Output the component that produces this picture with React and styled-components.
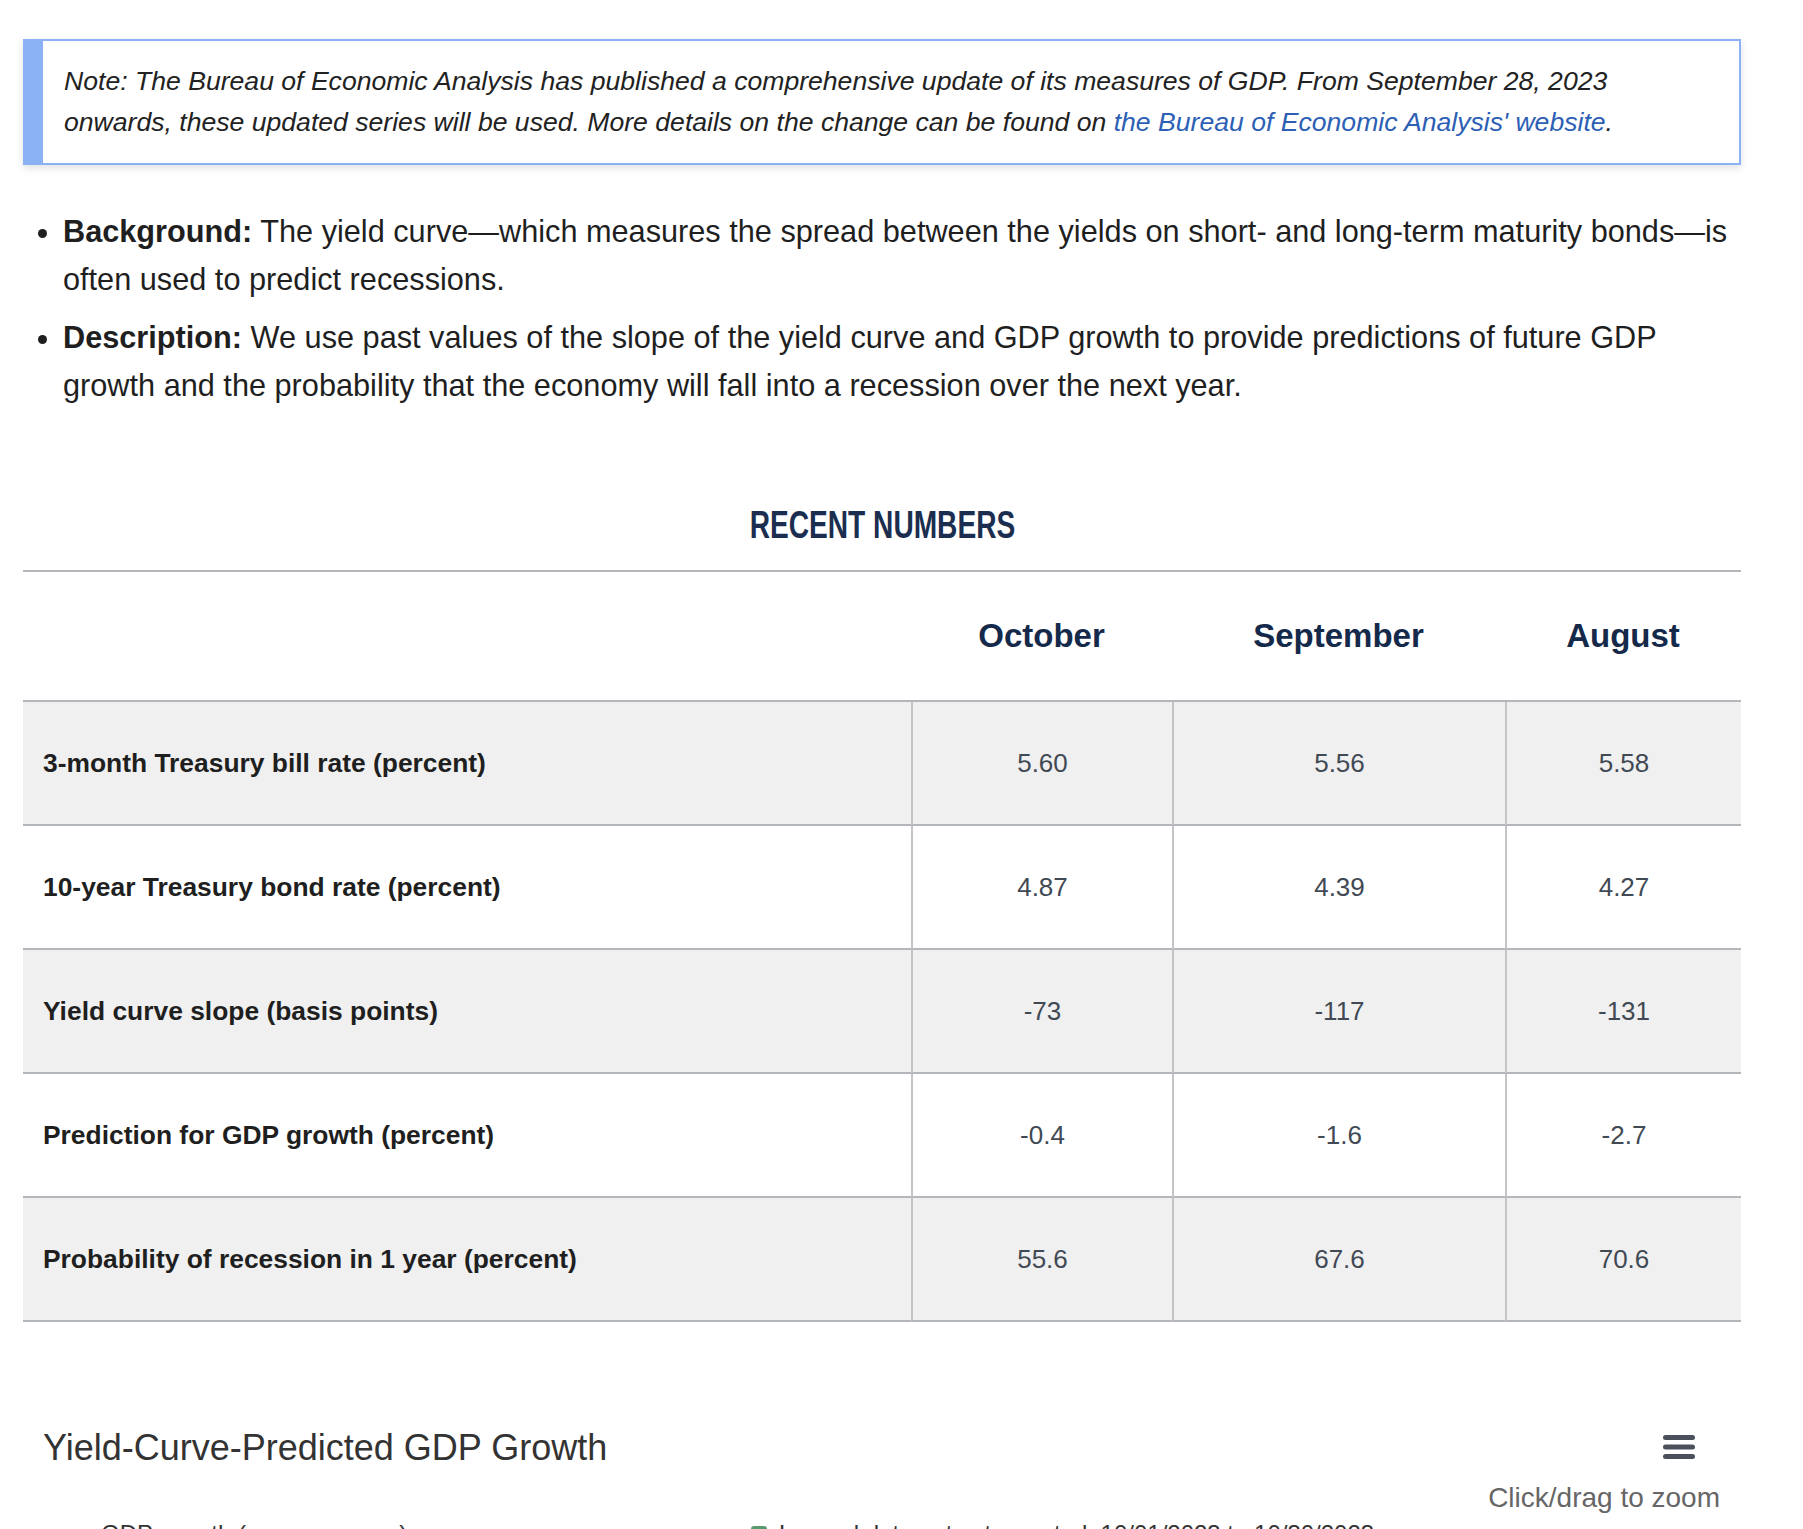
import React from "react";
import styled, { createGlobalStyle } from "styled-components";

const GlobalStyle = createGlobalStyle`
  html, body {
    margin: 0;
    padding: 0;
    background: #ffffff;
  }
  body {
    font-family: "Liberation Sans", Arial, sans-serif;
    color: #1f1f1f;
  }
`;

const Page = styled.div`
  width: 1718px;
  padding: 39px 0 0 23px;
`;

const Note = styled.div`
  border: 2px solid #8ab2f5;
  border-left: 20px solid #8ab2f5;
  box-shadow: 0 3px 8px rgba(0, 0, 0, 0.12);
  padding: 20px 20px 20px 21px;
  font-style: italic;
  font-size: 26.6px;
  line-height: 41px;
  color: #222;

  & a {
    color: #2d5fb5;
    text-decoration: none;
  }
`;

const Bullets = styled.ul`
  margin: 43px 0 0;
  padding-left: 40px;
  font-size: 30.7px;
  line-height: 48px;
  color: #1f1f1f;
`;

const Item = styled.li`
  margin-bottom: 10px;

  & b {
    font-weight: 700;
  }
`;

const Heading = styled.h2`
  margin: 91px 0 0;
  padding-bottom: 21px;
  border-bottom: 2px solid #b3b7bc;
  height: 48px;
  line-height: 48px;
  text-align: center;
  font-size: 38px;
  font-weight: 700;
  color: #1b2e50;
`;

const HeadingText = styled.span`
  display: inline-block;
  transform: scaleX(0.74);
`;

const Table = styled.table`
  width: 1718px;
  table-layout: fixed;
  border-collapse: separate;
  border-spacing: 0;
`;

const HeadCell = styled.th`
  padding: 44px 0;
  line-height: 40px;
  font-size: 33px;
  font-weight: 700;
  color: #15294b;
  text-align: center;
  border-bottom: 2px solid #b3b7bc;
`;

const Row = styled.tr`
  background: ${(p) => (p.$shaded ? "#f0f0f0" : "#ffffff")};
`;

const LabelCell = styled.td`
  padding: 45px 0 45px 20px;
  line-height: 32px;
  font-size: 26.4px;
  font-weight: 700;
  color: #1f1f1f;
  border-bottom: 2px solid #b3b7bc;
`;

const ValueCell = styled.td`
  padding: 45px 0;
  line-height: 32px;
  font-size: 26px;
  color: #414954;
  text-align: center;
  border-bottom: 2px solid #b3b7bc;
  border-left: 2px solid #c4c4c4;
`;

const Chart = styled.section`
  margin-top: 105px;
  padding: 0 21px 0 20px;
`;

const ChartHeader = styled.div`
  display: flex;
  justify-content: space-between;
  align-items: flex-start;
`;

const ChartTitle = styled.div`
  font-size: 36px;
  line-height: 42px;
  color: #333333;
`;

const ChartTools = styled.div`
  display: flex;
  flex-direction: column;
  align-items: flex-end;
`;

const MenuButton = styled.div`
  margin: 8px 25px 0 0;
  height: 24px;
  line-height: 0;
`;

const ZoomHint = styled.div`
  margin-top: 23px;
  font-size: 28px;
  line-height: 32px;
  color: #666666;
`;

const Legend = styled.div`
  display: flex;
  margin-top: 6px;
  padding-left: 30px;
  font-size: 24px;
  line-height: 28px;
  color: #333333;
`;

const LegendItem = styled.div`
  display: flex;
  align-items: center;
  gap: 12px;
  width: ${(p) => p.$width}px;
`;

const LineSymbol = styled.span`
  display: inline-block;
  width: 16px;
  height: 3px;
  background: ${(p) => p.$color};
`;

const Swatch = styled.span`
  display: inline-block;
  width: 16px;
  height: 16px;
  border-radius: 3px;
  background: ${(p) => p.$color};
`;

const months = ["October", "September", "August"];

const rows = [
  { label: "3-month Treasury bill rate (percent)", values: ["5.60", "5.56", "5.58"] },
  { label: "10-year Treasury bond rate (percent)", values: ["4.87", "4.39", "4.27"] },
  { label: "Yield curve slope (basis points)", values: ["-73", "-117", "-131"] },
  { label: "Prediction for GDP growth (percent)", values: ["-0.4", "-1.6", "-2.7"] },
  { label: "Probability of recession in 1 year (percent)", values: ["55.6", "67.6", "70.6"] },
];

function MenuIcon() {
  return (
    <svg width="32" height="24" viewBox="0 0 32 24">
      <rect x="0" y="0" width="32" height="5" rx="2.5" fill="#4a515c" />
      <rect x="0" y="9.5" width="32" height="5" rx="2.5" fill="#4a515c" />
      <rect x="0" y="19" width="32" height="5" rx="2.5" fill="#4a515c" />
    </svg>
  );
}

export default function App() {
  return (
    <>
      <GlobalStyle />
      <Page>
        <Note>
          Note: The Bureau of Economic Analysis has published a comprehensive update of its
          measures of GDP. From September 28, 2023 onwards, these updated series will be used.
          More details on the change can be found on{" "}
          <a href="#bea">the Bureau of Economic Analysis' website</a>.
        </Note>

        <Bullets>
          <Item>
            <b>Background:</b> The yield curve—which measures the spread between the yields on
            short- and long-term maturity bonds—is often used to predict recessions.
          </Item>
          <Item>
            <b>Description:</b> We use past values of the slope of the yield curve and GDP growth
            to provide predictions of future GDP growth and the probability that the economy will
            fall into a recession over the next year.
          </Item>
        </Bullets>

        <Heading>
          <HeadingText>RECENT NUMBERS</HeadingText>
        </Heading>

        <Table>
          <colgroup>
            <col style={{ width: 888 }} />
            <col style={{ width: 261 }} />
            <col style={{ width: 333 }} />
            <col style={{ width: 236 }} />
          </colgroup>
          <thead>
            <tr>
              <HeadCell />
              {months.map((m) => (
                <HeadCell key={m}>{m}</HeadCell>
              ))}
            </tr>
          </thead>
          <tbody>
            {rows.map((r, i) => (
              <Row key={r.label} $shaded={i % 2 === 0}>
                <LabelCell>{r.label}</LabelCell>
                {r.values.map((v, j) => (
                  <ValueCell key={j}>{v}</ValueCell>
                ))}
              </Row>
            ))}
          </tbody>
        </Table>

        <Chart>
          <ChartHeader>
            <ChartTitle>Yield-Curve-Predicted GDP Growth</ChartTitle>
            <ChartTools>
              <MenuButton>
                <MenuIcon />
              </MenuButton>
              <ZoomHint>Click/drag to zoom</ZoomHint>
            </ChartTools>
          </ChartHeader>
          <Legend>
            <LegendItem $width={678}>
              <LineSymbol $color="#1f4e8c" />
              GDP growth (year over year)
            </LegendItem>
            <LegendItem $width={700}>
              <Swatch $color="#5a9a6e" />
              Lagged data not yet reported, 10/01/2023 to 10/30/2023
            </LegendItem>
          </Legend>
        </Chart>
      </Page>
    </>
  );
}
